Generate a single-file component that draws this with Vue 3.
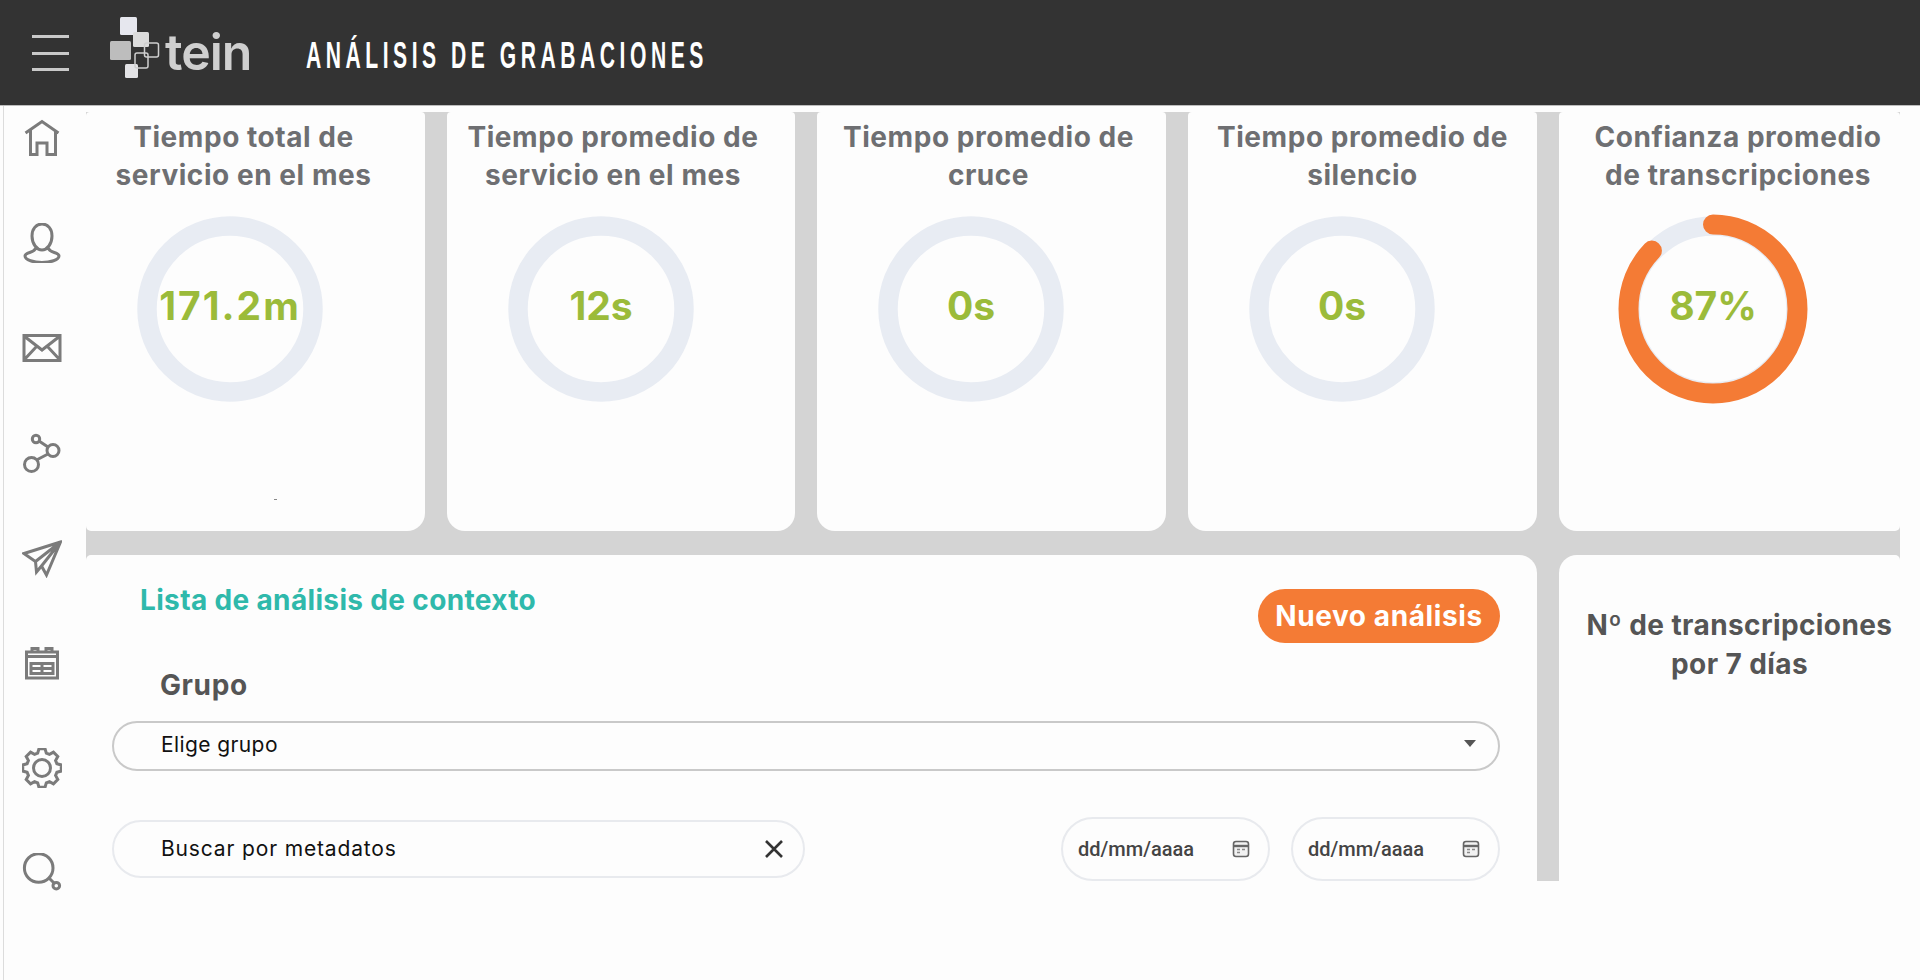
<template>
  <div class="page">
    <header class="topbar">
      <button class="burger" aria-label="Menú">
        <span></span><span></span><span></span>
      </button>
      <div class="logo">
        <svg class="logo-mark" width="52" height="64" viewBox="0 0 52 64">
          <rect x="11" y="0" width="17" height="18" rx="1.5" fill="#e6e7ee" />
          <rect x="24" y="15" width="16" height="15" rx="1.5" fill="#dcdcdc" />
          <rect x="1" y="24" width="21" height="19" rx="1.5" fill="#bdbdbd" />
          <rect x="16" y="47" width="13" height="14" rx="1.5" fill="#e3e3e6" />
          <rect x="35.5" y="26" width="14" height="14" rx="2" fill="none" stroke="#cfcfcf" stroke-width="1.5" />
          <rect x="26" y="36" width="13" height="15" rx="2" fill="none" stroke="#cfcfcf" stroke-width="1.5" />
        </svg>
        <span class="logo-text">tein</span>
      </div>
      <h1 class="page-title">ANÁLISIS DE GRABACIONES</h1>
    </header>

    <div class="body">
      <nav class="sidebar">
        <svg v-for="icon in navIcons" :key="icon.name" class="nav-icon" width="40" height="40" viewBox="0 0 40 40">
          <path v-if="icon.d" :d="icon.d" />
          <circle v-for="(c, i) in icon.circles" :key="i" :cx="c[0]" :cy="c[1]" :r="c[2]" />
        </svg>
      </nav>

      <main class="grid">
        <section v-for="(stat, index) in stats" :key="stat.title" class="card stat-card" :class="`stat-${index + 1}`">
          <h2 class="stat-title">{{ stat.title[0] }}<br />{{ stat.title[1] }}</h2>
          <div class="ring">
            <svg width="190" height="190" viewBox="0 0 190 190">
              <circle cx="95" cy="95" r="83" fill="none" stroke="#e8ecf3" stroke-width="19.5" />
              <circle
                v-if="stat.percent"
                cx="95"
                cy="95"
                r="84.5"
                fill="none"
                stroke="#f47b35"
                stroke-width="20"
                stroke-linecap="round"
                :stroke-dasharray="dash(stat.percent)"
                transform="rotate(-90 95 95)"
              />
            </svg>
            <span class="ring-value">{{ stat.value }}</span>
          </div>
          <i v-if="index === 0" class="speck"></i>
        </section>

        <section class="card list-card">
          <div class="list-head">
            <h2 class="list-title">Lista de análisis de contexto</h2>
            <button class="new-btn">Nuevo análisis</button>
          </div>
          <label class="group-label">Grupo</label>
          <div class="select">
            <span>Elige grupo</span>
            <i class="caret"></i>
          </div>
          <div class="filters">
            <div class="search">
              <span>Buscar por metadatos</span>
              <svg width="22" height="22" viewBox="0 0 22 22">
                <path d="M3 3 L19 19 M19 3 L3 19" fill="none" stroke="#333" stroke-width="2.6" />
              </svg>
            </div>
            <div class="dates">
              <div v-for="n in 2" :key="n" class="date">
                <span>dd/mm/aaaa</span>
                <svg width="18" height="18" viewBox="0 0 18 18">
                  <rect x="1.5" y="1.5" width="15" height="15" rx="2.5" fill="#f1f1f1" stroke="#666" stroke-width="1.6" />
                  <path d="M1.5 6 H16.5" stroke="#666" stroke-width="2.4" />
                  <path d="M5 9.5 H8 M10 9.5 H13 M5 12.5 H8" stroke="#888" stroke-width="1.3" />
                </svg>
              </div>
            </div>
          </div>
        </section>

        <section class="card chart-card">
          <h2 class="chart-title">Nº de transcripciones<br />por 7 días</h2>
        </section>
      </main>
    </div>
  </div>
</template>

<script setup>
const stats = [
  { title: ['Tiempo total de', 'servicio en el mes'], value: '171.2m' },
  { title: ['Tiempo promedio de', 'servicio en el mes'], value: '12s' },
  { title: ['Tiempo promedio de', 'cruce'], value: '0s' },
  { title: ['Tiempo promedio de', 'silencio'], value: '0s' },
  { title: ['Confianza promedio', 'de transcripciones'], value: '87%', percent: 87 },
]

function dash(percent) {
  const len = 2 * Math.PI * 84.5
  return `${(len * percent) / 100} ${len}`
}

// contorno del engranaje
function gearPath(teeth, outer, inner) {
  const pts = []
  const step = (Math.PI * 2) / teeth
  for (let i = 0; i < teeth; i++) {
    const a = i * step - Math.PI / 2
    const at = (r, off) => `${(20 + r * Math.cos(a + off)).toFixed(2)} ${(20 + r * Math.sin(a + off)).toFixed(2)}`
    pts.push(at(inner, -step * 0.36), at(outer, -step * 0.2), at(outer, step * 0.2), at(inner, step * 0.36))
  }
  return 'M' + pts.join(' L') + ' Z'
}

const navIcons = [
  { name: 'home', d: 'M3.5 15 L20 3.5 L36.5 15 M8.5 12 V36.5 H15 V25 H25 V36.5 H33.5 V12' },
  {
    name: 'user',
    d: 'M13.5 25 C13 30 3 29 3 33 C3 37 12 39.5 20 39.5 C28 39.5 37 37 37 33 C37 29 27 30 26.5 25 M20 1 C14 1 10 6 10 13 C10 21 15 27 20 27 C25 27 30 21 30 13 C30 6 26 1 20 1 Z',
  },
  { name: 'mail', d: 'M2 7.5 H38 V32.5 H2 Z M2 8 L20 22 L38 8 M2 32 L15 18 M38 32 L25 18' },
  {
    name: 'share',
    d: 'M17 8 L26 14 M26 21 L14.5 27',
    circles: [[9.5, 31.5, 7], [31, 17.5, 6], [14, 6, 3.7]],
  },
  {
    name: 'send',
    d: 'M38.5 4 L2 15.5 L13.5 23.5 L14.5 34 L19.5 28 L24.5 37 Z M38.5 4 L13.5 23.5 M38.5 4 L19.5 28',
  },
  {
    name: 'calendar',
    d: 'M4.5 9 H35.5 V35 H4.5 Z M4.5 13.5 H35.5 M10 9 V5.5 H16 V9 M24 9 V5.5 H30 V9 M9 20.5 H31 V30.5 H9 Z M9 25.5 H31 M20 20.5 V30.5',
  },
  { name: 'gear', d: gearPath(8, 19.5, 15.5), circles: [[20, 20, 8.5]] },
  { name: 'search', d: 'M27 25 L32 30', circles: [[16.7, 15, 14.3], [34.3, 32.7, 3.3]] },
]
</script>

<style>
html,
body {
  margin: 0;
  background: #fdfdfd;
}
</style>

<style scoped>
.page {
  font-family: Inter, 'Noto Sans', sans-serif;
  background: #fdfdfd;
  height: 980px;
  overflow: hidden;
}

.topbar {
  height: 105px;
  background: #333333;
  border-bottom: 1px solid #bdbdbd;
  box-sizing: content-box;
  display: flex;
  align-items: center;
}

.burger {
  width: 37px;
  height: 36px;
  margin-left: 32px;
  margin-top: 1px;
  padding: 0;
  border: 0;
  background: none;
  display: flex;
  flex-direction: column;
  justify-content: space-between;
}

.burger span {
  display: block;
  height: 3px;
  background: #c9c9c9;
}

.logo {
  display: flex;
  align-items: center;
  margin-left: 40px;
  width: 140px;
}

.logo-mark {
  flex: none;
  margin-top: -7px;
}

.logo-text {
  margin-left: 4px;
  margin-top: -2px;
  font-size: 50px;
  font-weight: 600;
  letter-spacing: -1px;
  line-height: 1;
  color: #cfcfcf;
}

.page-title {
  margin: 6px 0 0 57px;
  font-family: 'Liberation Sans', sans-serif;
  font-size: 37px;
  font-weight: 700;
  letter-spacing: 7.95px;
  color: #fff;
  white-space: nowrap;
  transform: scaleX(0.57);
  transform-origin: left center;
}

.body {
  display: flex;
  align-items: flex-start;
}

.sidebar {
  width: 83px;
  height: 874px;
  margin-left: 3px;
  border-left: 1px solid #dcdcdc;
  padding: 12px 6px 0 0;
  box-sizing: border-box;
  display: flex;
  flex-direction: column;
  align-items: center;
  gap: 65px;
}

.nav-icon {
  flex: none;
  margin-left: -1px;
}

.nav-icon path,
.nav-icon circle {
  fill: none;
  stroke: #7b7b7b;
  stroke-width: 3;
}

.grid {
  width: 1814px;
  margin-top: 6px;
  background: #d4d4d4;
  display: grid;
  grid-template-columns: 339px 348px 349px 349px 341px;
  grid-template-rows: 419px 326px;
  column-gap: 22px;
  row-gap: 24px;
}

.card {
  background: #fdfdfd;
  box-sizing: border-box;
}

.stat-card {
  position: relative;
  border-radius: 4px 4px 18px 18px;
  padding-top: 6px;
}

.stat-1 {
  border-bottom-left-radius: 5px;
  padding-right: 24px;
}

.stat-2 {
  padding-right: 16px;
}

.stat-3 {
  padding-right: 6px;
}

.stat-5 {
  border-bottom-right-radius: 5px;
  padding-left: 17px;
}

.stat-title {
  margin: 0;
  font-size: 28px;
  font-weight: 700;
  letter-spacing: 0.55px;
  line-height: 38px;
  text-align: center;
  color: #6e6f72;
  white-space: nowrap;
}

.ring {
  position: absolute;
  top: 102px;
  left: 59px;
  width: 190px;
  height: 190px;
}

.stat-1 .ring {
  left: 49px;
}

.ring svg {
  display: block;
}

.ring-value {
  position: absolute;
  inset: 0 0 8px 0;
  display: flex;
  align-items: center;
  justify-content: center;
  font-size: 39px;
  font-weight: 700;
  color: #9bbb3a;
}

.stat-1 .ring-value {
  letter-spacing: 2px;
}

.speck {
  position: absolute;
  left: 188px;
  top: 387px;
  width: 3px;
  height: 1px;
  background: #888;
}

.list-card {
  grid-column: 1 / span 4;
  border-radius: 5px 18px 0 0;
  padding: 26px 37px 0 26px;
}

.list-head {
  display: flex;
  justify-content: space-between;
  align-items: flex-start;
  height: 62px;
}

.list-title {
  margin: 0 0 0 28px;
  font-size: 28px;
  font-weight: 700;
  letter-spacing: 0.35px;
  line-height: 38px;
  color: #2fb9ab;
}

.new-btn {
  margin-top: 8px;
  width: 242px;
  height: 54px;
  border: 0;
  border-radius: 27px;
  background: #f47b35;
  color: #fff;
  font-family: inherit;
  font-size: 28px;
  font-weight: 700;
  letter-spacing: 0.6px;
  padding: 0;
}

.group-label {
  display: block;
  margin: 23px 0 17px 48px;
  font-size: 28px;
  font-weight: 700;
  letter-spacing: 0.6px;
  line-height: 38px;
  color: #555;
}

.select {
  height: 50px;
  box-sizing: border-box;
  border: 2px solid #c9c9c9;
  border-radius: 25px;
  padding: 0 22px 0 47px;
  display: flex;
  align-items: center;
  justify-content: space-between;
  font-size: 21px;
  letter-spacing: 0.4px;
  color: #111;
}

.select span {
  margin-bottom: 3px;
}

.caret {
  width: 0;
  height: 0;
  margin-bottom: 5px;
  border-left: 6px solid transparent;
  border-right: 6px solid transparent;
  border-top: 7px solid #555;
}

.filters {
  margin-top: 46px;
  display: flex;
  align-items: center;
  justify-content: space-between;
}

.search {
  width: 693px;
  height: 58px;
  box-sizing: border-box;
  border: 2px solid #e8eaee;
  border-radius: 29px;
  padding: 0 18px 0 47px;
  display: flex;
  align-items: center;
  justify-content: space-between;
  font-size: 21px;
  letter-spacing: 0.85px;
  color: #111;
}

.search span {
  margin-bottom: 2px;
}

.dates {
  display: flex;
  gap: 21px;
}

.date {
  width: 209px;
  height: 64px;
  box-sizing: border-box;
  border: 2px solid #e8eaee;
  border-radius: 32px;
  padding: 0 18px 0 15px;
  display: flex;
  align-items: center;
  justify-content: space-between;
  font-family: Roboto, sans-serif;
  font-size: 20px;
  font-weight: 500;
  color: #444;
}

.chart-card {
  border-radius: 18px 5px 0 0;
  padding: 51px 0 0 20px;
}

.chart-title {
  margin: 0;
  font-size: 28px;
  font-weight: 700;
  letter-spacing: 0.4px;
  line-height: 39px;
  text-align: center;
  color: #555;
  white-space: nowrap;
}
</style>
